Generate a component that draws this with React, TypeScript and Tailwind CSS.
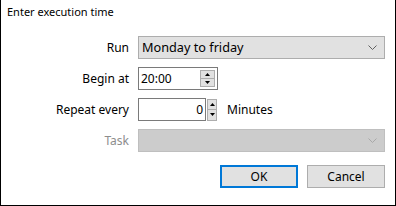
import React from 'react';

const font = { fontFamily: '"Noto Sans", "Open Sans", Arial, sans-serif' };

function Chevron({ color }: { color: string }) {
  return (
    <svg width="9" height="5" viewBox="0 0 9 5" className="shrink-0">
      <path d="M0.5 0.5 L4.5 4.5 L8.5 0.5" fill="none" stroke={color} strokeWidth="1" />
    </svg>
  );
}

function Spin({ className }: { className: string }) {
  return (
    <div className={`flex flex-col ${className}`}>
      <div className="flex-1 flex items-center justify-center bg-[#e1e1e1] border border-[#adadad]">
        <svg width="5" height="3" viewBox="0 0 5 3"><path d="M2.5 0 L5 3 L0 3 Z" fill="#000" /></svg>
      </div>
      <div className="flex-1 flex items-center justify-center bg-[#e1e1e1] border border-[#adadad] border-t-0">
        <svg width="5" height="3" viewBox="0 0 5 3"><path d="M0 0 L5 0 L2.5 3 Z" fill="#000" /></svg>
      </div>
    </div>
  );
}

function Row({ label, disabled, children }: { label: string; disabled?: boolean; children: React.ReactNode }) {
  return (
    <div className="flex items-center h-[23px]">
      <div className={`w-[129px] pr-[1px] text-right ${disabled ? 'text-[#8d8d8d]' : 'text-black'}`}>{label}</div>
      <div className="ml-[8px] flex items-center flex-1">{children}</div>
    </div>
  );
}

export default function App() {
  return (
    <div className="w-[396px] h-[206px] bg-white border-x border-b border-black text-[12px] text-black flex flex-col" style={font}>
      <div className="pl-[6px] pt-[4px] leading-[16px] text-[11px]">Enter execution time</div>
      <div className="flex flex-col gap-[8px] mt-[16px] pr-[10px]">
        <Row label="Run">
          <div className="flex-1 h-[23px] bg-[#e1e1e1] border border-[#adadad] flex items-center pl-[3px] pr-[7px]">
            <span className="flex-1 text-[12.7px]">Monday to friday</span>
            <Chevron color="#606060" />
          </div>
        </Row>
        <Row label="Begin at">
          <div className="w-[80px] h-[23px] border border-[#7a7a7a] flex items-center pl-[2px] pr-[2px]">
            <span className="flex-1">20:00</span>
            <Spin className="w-[15px] h-[17px]" />
          </div>
        </Row>
        <Row label="Repeat every">
          <div className="w-[68px] h-[23px] border border-[#7a7a7a] flex items-center justify-end pr-[2px]">0</div>
          <Spin className="w-[10px] h-[22px] ml-[1px]" />
          <span className="ml-[10px]">Minutes</span>
        </Row>
        <Row label="Task" disabled>
          <div className="flex-1 h-[23px] bg-[#cccccc] border border-[#bfbfbf] flex items-center justify-end pr-[7px]">
            <Chevron color="#a8a8a8" />
          </div>
        </Row>
      </div>
      <div className="flex justify-end gap-[9px] mt-[13px] pr-[10px]">
        <button className="w-[78px] h-[23px] bg-[#e1e1e1] border-2 border-[#0078d7] leading-none">OK</button>
        <button className="w-[78px] h-[23px] bg-[#e1e1e1] border border-[#adadad] leading-none">Cancel</button>
      </div>
    </div>
  );
}
